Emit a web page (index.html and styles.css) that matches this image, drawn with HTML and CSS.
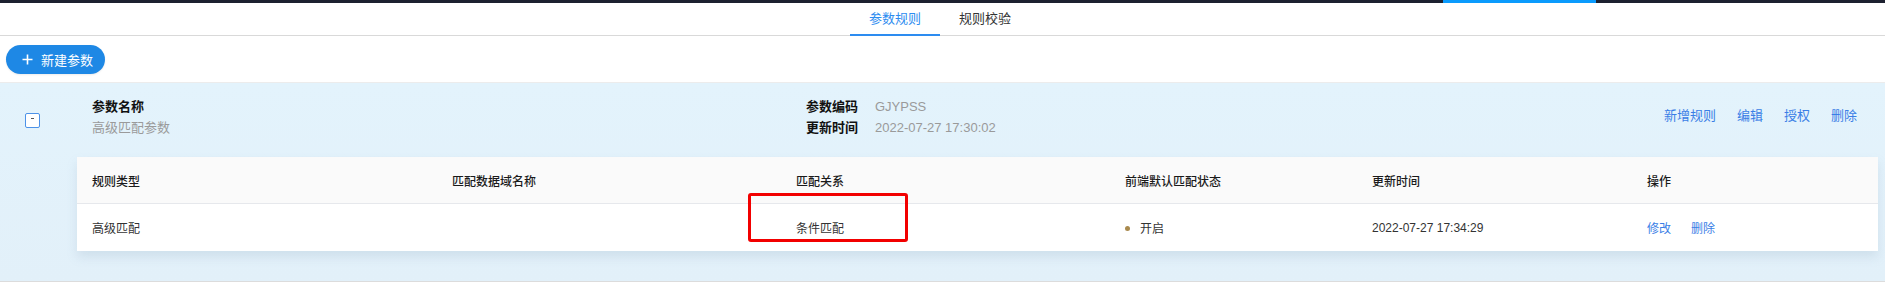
FILE: index.html
```html
<!DOCTYPE html>
<html>
<head>
  <title>参数规则</title>
  <link rel="stylesheet" href="styles.css">
</head>
<body>
  <div class="topbar"><div class="topbar-active"></div></div>

  <div class="tabs">
    <div class="tab active">参数规则</div>
    <div class="tab">规则校验</div>
  </div>

  <div class="toolbar">
    <button class="btn-new">
      <svg width="11" height="11" viewBox="0 0 11 11"><path d="M5.5 0.5v10M0.5 5.5h10" stroke="#fff" stroke-width="1.6"/></svg>
      <span>新建参数</span>
    </button>
  </div>

  <div class="param">
    <div class="param-head">
      <span class="checkbox"><span class="dash"></span></span>
      <div class="param-name">
        <div class="label">参数名称</div>
        <div class="value">高级匹配参数</div>
      </div>
      <div class="param-meta">
        <div class="meta-row"><span class="label">参数编码</span><span class="value">GJYPSS</span></div>
        <div class="meta-row"><span class="label">更新时间</span><span class="value">2022-07-27 17:30:02</span></div>
      </div>
      <div class="param-actions">
        <a>新增规则</a>
        <a>编辑</a>
        <a>授权</a>
        <a>删除</a>
      </div>
    </div>

    <div class="card">
      <div class="grid head">
        <div>规则类型</div>
        <div>匹配数据域名称</div>
        <div>匹配关系</div>
        <div>前端默认匹配状态</div>
        <div>更新时间</div>
        <div>操作</div>
      </div>
      <div class="grid row">
        <div>高级匹配</div>
        <div></div>
        <div>条件匹配</div>
        <div><span class="dot"></span>开启</div>
        <div class="num">2022-07-27 17:34:29</div>
        <div class="ops"><a>修改</a><a>删除</a></div>
        <div class="mark"></div>
      </div>
    </div>
  </div>
</body>
</html>
```

FILE: styles.css
```css
body {
  margin: 0;
  font-family: "Liberation Sans", "Noto Sans CJK SC", sans-serif;
  background: #fff;
  color: #333;
}
a {
  cursor: pointer;
}
.topbar {
  height: 3px;
  background: #1d2130;
}
.topbar-active {
  margin-left: 1443px;
  width: 153px;
  height: 3px;
  background: #0a9bfd;
}
.tabs {
  display: flex;
  justify-content: center;
  height: 32px;
  border-bottom: 1px solid #d9d9d9;
  padding-right: 5px;
}
.tab {
  width: 90px;
  text-align: center;
  font-size: 13px;
  line-height: 31px;
  color: #333;
  border-bottom: 2px solid transparent;
  margin-bottom: -1px;
  box-sizing: border-box;
  height: 33px;
}
.tab.active {
  color: #2d8cf0;
  border-bottom-color: #2d8cf0;
}
.toolbar {
  padding: 9px 6px 8px;
}
.btn-new {
  display: flex;
  align-items: center;
  gap: 8px;
  height: 29px;
  width: 99px;
  padding: 0 0 0 16px;
  border: none;
  border-radius: 15px;
  background: #1e88e5;
  color: #fff;
  font-family: "Liberation Sans", "Noto Sans CJK SC", sans-serif;
  font-size: 13px;
  box-shadow: 0 1px 2px rgba(0,0,0,0.08);
}
.param {
  border-top: 1px solid #ececec;
  border-bottom: 1px solid #dcdcdc;
  background: linear-gradient(180deg, #e3f3fc 0%, #e2f0f9 100%);
  padding: 13px 7px 30px 0;
}
.param-head {
  display: flex;
  align-items: center;
  font-size: 13px;
  line-height: 21px;
}
.checkbox {
  margin: 6px 0 0 25px;
  width: 15px;
  height: 15px;
  box-sizing: border-box;
  border: 1px solid #4c92e8;
  border-radius: 2px;
  background: #fff;
  display: flex;
  align-items: center;
  justify-content: center;
}
.dash {
  width: 3px;
  height: 1px;
  background: #555;
  margin-top: -3px;
}
.param-name {
  margin-left: 52px;
  width: 714px;
}
.label {
  color: #111;
  font-weight: bold;
}
.value {
  color: #9a9a9a;
}
.meta-row .label {
  display: inline-block;
  width: 69px;
}
.param-actions {
  margin-left: auto;
  margin-right: 21px;
  display: flex;
  gap: 21px;
  color: #3a7ee6;
  padding-bottom: 4px;
}
.card {
  margin: 19px 0 0 77px;
  background: #fff;
  box-shadow: 0 6px 10px rgba(120,150,180,0.18);
  font-size: 12px;
}
.grid {
  display: grid;
  grid-template-columns: 360px 344px 329px 247px 275px 246px;
  align-items: center;
}
.grid > div {
  padding-left: 15px;
}
.head {
  height: 46px;
  background: #fafafa;
  border-bottom: 1px solid #e6e8ec;
  color: #1a1a1a;
  font-weight: 500;
}
.row {
  position: relative;
  height: 47px;
  color: #333;
}
.dot {
  display: inline-block;
  width: 5px;
  height: 5px;
  border-radius: 50%;
  background: #a98a4e;
  margin: 0 10px 2px 0;
  vertical-align: middle;
}
.ops {
  display: flex;
  gap: 20px;
  color: #3a7ee6;
}
.grid > .mark {
  position: absolute;
  left: 671px;
  top: -11px;
  width: 160px;
  height: 49px;
  box-sizing: border-box;
  padding: 0;
  border: 3px solid #f20000;
  border-radius: 3px;
}
```
